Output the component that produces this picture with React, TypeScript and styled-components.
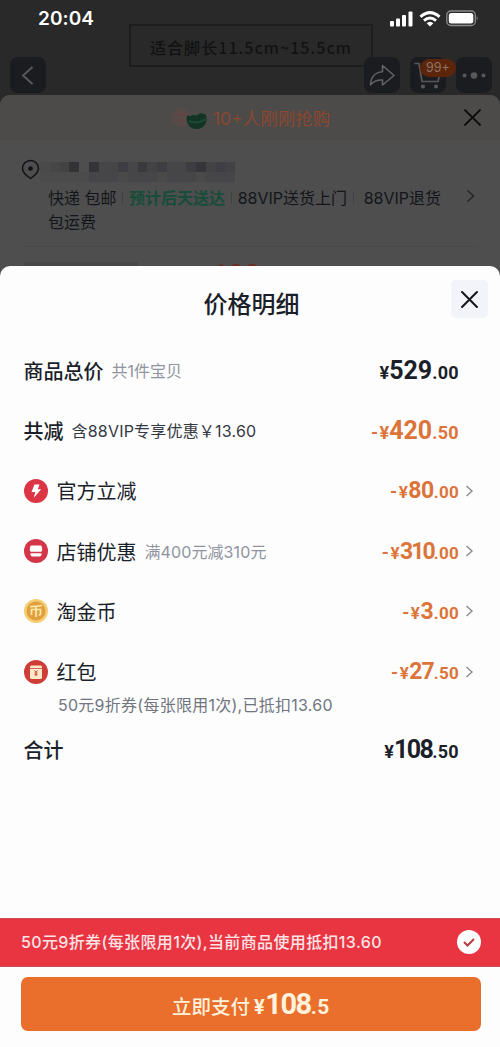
import React from "react";
import styled, { createGlobalStyle } from "styled-components";

const GlobalStyle = createGlobalStyle`
  * { box-sizing: border-box; }
  body {
    margin: 0;
    background: #2a2a2a;
    font-family: Inter, "Noto Sans CJK SC", sans-serif;
    color: #1b1f2a;
  }
`;

const Screen = styled.main`
  position: relative;
  width: 500px;
  height: 1047px;
  overflow: hidden;
  background: #292929;
  display: flex;
  flex-direction: column;
`;

const StatusBar = styled.header`
  position: absolute;
  inset: 0 0 auto 0;
  height: 37px;
  padding: 0 21px 0 38px;
  display: flex;
  align-items: center;
  justify-content: space-between;
  color: #fff;
`;

const Clock = styled.span`
  font-size: 19px;
  font-weight: 600;
  letter-spacing: 0.1px;
`;

const StatusIcons = styled.div`
  display: flex;
  align-items: center;
  gap: 5px;
`;

const ProductImage = styled.section`
  height: 95px;
  padding-top: 24px;
  display: flex;
  justify-content: center;
  align-items: flex-start;
`;

const SizeLabel = styled.div`
  width: 244px;
  height: 43px;
  margin-left: 2px;
  border: 2px solid #1d1d1d;
  display: flex;
  align-items: center;
  justify-content: center;
  font: 500 16px "Noto Sans CJK SC", sans-serif;
  letter-spacing: 1.05px;
  padding-top: 3px;
  color: #121212;
  white-space: nowrap;
`;

const NavBar = styled.nav`
  position: absolute;
  top: 57px;
  left: 10px;
  right: 8px;
  display: flex;
  gap: 10px;
`;

const NavButton = styled.div<{ $push?: boolean }>`
  position: relative;
  width: 36px;
  height: 36px;
  margin-right: ${(p) => (p.$push ? "auto" : "0")};
  border-radius: 8px;
  background: #1b1c1f;
  display: flex;
  align-items: center;
  justify-content: center;
`;

const CartBadge = styled.span`
  position: absolute;
  top: 2px;
  left: 10px;
  width: 36px;
  height: 18px;
  border-radius: 9px;
  background: #5c240b;
  color: #8f7765;
  font-size: 12.5px;
  line-height: 18px;
  text-align: center;
  z-index: 1;
`;

const ProductCard = styled.section`
  flex: 1;
  border-radius: 10px 10px 0 0;
  background: #4e4e4e;
  overflow: hidden;
`;

const BuyersStrip = styled.div`
  height: 45px;
  padding: 0 19px 0 171px;
  display: flex;
  align-items: center;
  justify-content: space-between;
  background: #4d4b49;
  color: #8c4730;
  font-size: 17.5px;
`;

const Buyers = styled.div`
  display: flex;
  align-items: center;
  gap: 6px;
  white-space: nowrap;
`;

const Delivery = styled.div`
  height: 106px;
  padding: 18px 25px 0 21px;
  display: flex;
  align-items: flex-start;
`;

const DeliveryBody = styled.div`
  width: 404px;
`;

const MaskedAddress = styled.div`
  display: flex;
  width: 195px;
  height: 20px;
  margin-top: 4px;
`;

const MaskBlock = styled.span<{ $tone: string; $lower: string }>`
  flex: 1;
  height: 20px;
  background: linear-gradient(${(p) => p.$tone} 0 50%, ${(p) => p.$lower} 50%);
`;

const DeliveryLine = styled.div<{ $first?: boolean }>`
  display: flex;
  align-items: center;
  height: 24px;
  margin-top: ${(p) => (p.$first ? 3 : 0)}px;
  padding-left: 8px;
  font-size: 16px;
  color: #14151a;
  white-space: nowrap;
`;

const Promised = styled.span`
  font-weight: 600;
  color: #184c3a;
`;

const Separator = styled.i<{ $after?: number }>`
  width: 1px;
  height: 13px;
  margin: 0 ${(p) => p.$after ?? 6}px 0 5.6px;
  background: #424242;
`;

const DeliveryArrow = styled.div`
  margin: 29px 0 0 auto;
`;

const PriceStrip = styled.div`
  height: 60px;
  margin: 0 24px;
  border-top: 1px solid #494949;
  display: flex;
  align-items: flex-start;
  gap: 74px;
  color: #6b2c18;
  font: 700 28px/28px Roboto, sans-serif;
  padding-top: 14px;
`;

const GreyTag = styled.span`
  width: 114px;
  height: 24px;
  margin-top: 1px;
  background: #484848;
`;

const Sheet = styled.section`
  position: absolute;
  inset: 266px 0 0 0;
  border-radius: 10px 10px 0 0;
  background: #fdfdfd;
  display: flex;
  flex-direction: column;
`;

const SheetHeader = styled.div`
  height: 74px;
  padding: 14px 12px 0 49px;
  display: flex;
  align-items: flex-start;
`;

const Title = styled.h1`
  flex: 1;
  margin: 5px 0 0;
  padding-left: 3px;
  text-align: center;
  font-size: 24px;
  line-height: 40px;
  font-weight: 500;
`;

const CloseButton = styled.div`
  width: 37px;
  height: 38px;
  border-radius: 5px;
  background: #f2f4f9;
  display: flex;
  align-items: center;
  justify-content: center;
`;

const Rows = styled.div`
  flex: 1;
  padding: 0 24px;
`;

const Row = styled.div<{ $h?: number }>`
  height: ${(p) => p.$h ?? 60.3}px;
  display: flex;
  align-items: center;
  white-space: nowrap;
`;

const Label = styled.span<{ $strong?: boolean }>`
  margin-left: -0.5px;
  font-size: 20px;
  font-weight: ${(p) => (p.$strong ? 500 : 400)};
`;

const Note = styled.span<{ $color?: string; $spacing?: number }>`
  margin-left: 8px;
  font-size: 16px;
  letter-spacing: ${(p) => p.$spacing ?? 0}px;
  color: ${(p) => p.$color ?? "#8f949f"};
`;

const RowIcon = styled.svg`
  width: 24px;
  height: 24px;
  margin-right: 9px;
`;

const Coupon = styled.div`
  height: 24px;
  margin-top: -9px;
  margin-bottom: 1px;
  padding-left: 34px;
  line-height: 24px;
  font-size: 16px;
  letter-spacing: 0.26px;
  color: #70757f;
  white-space: nowrap;
`;

const PriceBox = styled.span<{ $accent?: boolean; $arrow?: boolean }>`
  margin-left: auto;
  margin-right: ${(p) => (p.$arrow ? 0 : 17)}px;
  padding-top: 1px;
  display: flex;
  align-items: baseline;
  font-family: Roboto, sans-serif;
  font-weight: 700;
  color: ${(p) => (p.$accent ? "#dc743a" : "#1b1f2a")};
`;

const Small = styled.span<{ $size?: number; $spacing?: number }>`
  font-size: ${(p) => p.$size ?? 18}px;
  letter-spacing: ${(p) => p.$spacing ?? 0}px;
`;

const Big = styled.span<{ $size: number; $spacing?: number }>`
  font-size: ${(p) => p.$size}px;
  letter-spacing: ${(p) => p.$spacing ?? 0}px;
  line-height: 30px;
`;

const ArrowSvg = styled.svg`
  margin-left: 4px;
  margin-top: -1px;
  align-self: center;
`;

const CouponBar = styled.div`
  height: 49px;
  padding: 0 19px 0 21px;
  display: flex;
  align-items: center;
  justify-content: space-between;
  background: #e93442;
  border-top: 1px solid #cf4a56;
  border-bottom: 1px solid #cf4a56;
  color: #ffe4e6;
  font-size: 16px;
  font-weight: 500;
  letter-spacing: 0.36px;
  white-space: nowrap;
`;

const CouponText = styled.span`
  padding-bottom: 3px;
`;

const CheckMark = styled.svg`
  margin-bottom: 2px;
`;

const PayArea = styled.div`
  height: 80px;
  padding: 10px 19px 0 21px;
`;

const PayButton = styled.button`
  width: 100%;
  height: 54px;
  border: 0;
  border-radius: 7px;
  background: #ea6f2d;
  color: #fff2dc;
  display: flex;
  align-items: baseline;
  justify-content: center;
  padding: 10.5px 0 0;
  font: 500 19.5px/36px "Noto Sans CJK SC", sans-serif;
  white-space: nowrap;
`;

const PayAmount = styled.span`
  margin-left: 4px;
  font-family: Roboto, sans-serif;
  font-weight: 700;
`;

function Cross({ size, width, color }: { size: number; width: number; color: string }) {
  return (
    <svg width={size} height={size} viewBox="0 0 16 16" fill="none" stroke={color} strokeWidth={width} strokeLinecap="round">
      <path d="M1 1 15 15M15 1 1 15" />
    </svg>
  );
}

function Arrow() {
  return (
    <ArrowSvg width="13" height="14" viewBox="0 0 13 14" fill="none" stroke="#898b90" strokeWidth="1.4">
      <path d="M3.500 2 9 7 3.500 12" />
    </ArrowSvg>
  );
}

type PriceProps = { sign?: boolean; whole: string; cents: string; tight?: number; accent?: boolean; arrow?: boolean };

function Price({ sign, whole, cents, tight = 0, accent, arrow }: PriceProps) {
  return (
    <PriceBox $accent={accent} $arrow={arrow}>
      {sign && <Small $spacing={1.5}>-</Small>}
      <Small $size={arrow ? 17 : 18} $spacing={arrow ? 0.5 : 0}>¥</Small>
      <Big $size={arrow ? 23 : 25} $spacing={-tight}>{whole}</Big>
      <Small $size={arrow ? 17 : 18} $spacing={0.3}>.{cents}</Small>
      {arrow && <Arrow />}
    </PriceBox>
  );
}

const maskTones = ["#4a4a4a", "#464647", "#434344", "#333336", "#4e4e4e", "#343437", "#464648", "#464648", "#3e3e42", "#464648", "#3a3a3e", "#434346", "#3e3e42", "#464648", "#464648", "#3e3e42", "#35353a", "#434346", "#3f3f43", "#434346"];

export default function App() {
  return (
    <Screen>
      <GlobalStyle />
      <ProductImage>
        <SizeLabel>适合脚长11.5cm~15.5cm</SizeLabel>
      </ProductImage>
      <NavBar>
        <NavButton $push>
          <svg width="36" height="36" fill="none" stroke="#5b5b5d" strokeWidth="1.8"><path d="M22.500 10 13 18.500 22.500 27" /></svg>
        </NavButton>
        <NavButton>
          <svg width="36" height="36" fill="none" stroke="#626264" strokeWidth="1.6" strokeLinejoin="round">
            <path d="M18.500 8.500 30 18.500 18.500 28v-5c-5-.4-9 1.300-12 4.800.3-7.600 4.800-12.500 12-13Z" />
          </svg>
        </NavButton>
        <NavButton>
          <svg width="36" height="36" fill="none" stroke="#58585a" strokeWidth="1.7" strokeLinejoin="round">
            <path d="M4.500 6.500H9L12 24.500H28L30.500 14" />
            <circle cx="13" cy="29.500" r="1.200" fill="#58585a" />
            <circle cx="26" cy="29.500" r="1.200" fill="#58585a" />
          </svg>
          <CartBadge>99+</CartBadge>
        </NavButton>
        <NavButton>
          <svg width="36" height="36" fill="#58585a">
            <circle cx="8.500" cy="18.500" r="2" /><circle cx="18" cy="18.500" r="3.300" /><circle cx="27.500" cy="18.500" r="2" />
          </svg>
        </NavButton>
      </NavBar>
      <ProductCard>
        <BuyersStrip>
          <Buyers>
            <svg width="36" height="22">
              <circle cx="10" cy="10.500" r="9.500" fill="#584a48" />
              <path d="M5 8q2-2 4 0M11 8q2-2 4 0M8 13q3 2 5-1" fill="none" stroke="#713c38" />
              <path d="M16.500 8q2.500 2 5 0l4 .5 4-2.500 5 1.500A10 10 0 1 1 16.500 8Z" fill="#123525" />
              <path d="M18 14q8 4 17-2" fill="none" stroke="#1d4a34" strokeWidth="2" />
            </svg>
            10+人刚刚抢购
          </Buyers>
          <Cross size={17} width={1.8} color="#0b0b0b" />
        </BuyersStrip>
        <Delivery>
          <svg width="19" height="22" viewBox="0 0 19 22" fill="none" stroke="#101114" strokeWidth="1.5">
            <path d="M9.500 20.500C5 17.500 1.500 14 1.500 10.500a8 8 0 0 1 16 0c0 3.500-3.500 7-8 10Z" />
            <circle cx="9.500" cy="10.500" r="1.600" fill="#101114" />
          </svg>
          <DeliveryBody>
            <MaskedAddress>
              {maskTones.map((tone, i) => (
                <MaskBlock key={i} $tone={tone} $lower={i < 5 ? "#4b4b4b" : i % 4 === 0 ? "#4a4a4b" : "#464648"} />
              ))}
            </MaskedAddress>
            <DeliveryLine $first>
              快递 包邮<Separator /><Promised>预计后天送达</Promised><Separator />88VIP送货上门<Separator $after={10} />88VIP退货
            </DeliveryLine>
            <DeliveryLine>包运费</DeliveryLine>
          </DeliveryBody>
          <DeliveryArrow>
            <svg width="9" height="14" fill="none" stroke="#252628" strokeWidth="1.5"><path d="M1.500 1.500 7.500 7 1.500 12.500" /></svg>
          </DeliveryArrow>
        </Delivery>
        <PriceStrip><GreyTag />108</PriceStrip>
      </ProductCard>

      <StatusBar>
        <Clock>20:04</Clock>
        <StatusIcons>
          <svg width="24" height="16" fill="#fff">
            <rect x="0" y="10" width="4" height="5.500" rx="1" /><rect x="6" y="7.500" width="4" height="8" rx="1" />
            <rect x="12" y="4" width="4" height="11.500" rx="1" /><rect x="18.500" y="0.500" width="4" height="15" rx="1" />
          </svg>
          <svg width="22" height="16" viewBox="0 0 22 16" fill="none" stroke="#fff" strokeWidth="3">
            <path d="M1.500 5.800Q11-2.600 20.500 5.800" /><path d="M5 9.600Q11 4.400 17 9.600" />
            <path d="M7.600 12.200Q11 9.200 14.400 12.200L11 15.600Z" fill="#fff" stroke="none" />
          </svg>
          <svg width="33" height="17">
            <rect x="0.800" y="1" width="28.500" height="14.500" rx="4" fill="none" stroke="#8a8a8a" strokeWidth="1.3" />
            <rect x="2.800" y="3" width="24.500" height="10.500" rx="2.500" fill="#fff" />
            <path d="M30.700 6q2 2.300 0 4.600Z" fill="#8a8a8a" />
          </svg>
        </StatusIcons>
      </StatusBar>

      <Sheet>
        <SheetHeader>
          <Title>价格明细</Title>
          <CloseButton><Cross size={17} width={1.9} color="#14161c" /></CloseButton>
        </SheetHeader>
        <Rows>
          <Row><Label $strong>商品总价</Label><Note>共1件宝贝</Note><Price whole="529" cents="00" /></Row>
          <Row><Label $strong>共减</Label><Note $color="#343843" $spacing={0.2}>含88VIP专享优惠￥13.60</Note><Price sign accent whole="420" cents="50" /></Row>
          <Row>
            <RowIcon viewBox="0 0 24 24">
              <circle cx="12" cy="12" r="12" fill="#dc3545" />
              <path d="M10.500 5.500h5l-1.700 4.700h3.400L9.800 18.800l1.400-5.800H7.500Z" fill="#fff" />
            </RowIcon>
            <Label>官方立减</Label><Price sign accent arrow tight={0.5} whole="80" cents="00" />
          </Row>
          <Row>
            <RowIcon viewBox="0 0 24 24">
              <circle cx="12" cy="12" r="12" fill="#d43549" />
              <path d="M7.500 6.500h9q1 0 1.200 1l.6 3.500q0 1.800-1.500 1.800H7.200q-1.500 0-1.500-1.800l.6-3.500q.2-1 1.200-1Z" fill="#fff" />
              <path d="M6.500 14.300h11v1.200q0 2-2 2h-7q-2 0-2-2Z" fill="#fff" />
            </RowIcon>
            <Label>店铺优惠</Label><Note $spacing={0.1}>满400元减310元</Note><Price sign accent arrow tight={2} whole="310" cents="00" />
          </Row>
          <Row>
            <RowIcon viewBox="0 0 24 24">
              <circle cx="12" cy="12" r="12" fill="#f6cd72" />
              <circle cx="12" cy="12" r="9.500" fill="#dfa03f" />
              <path d="M6 7.500q6 .2 12-1M12 7v11M7.500 16v-5.500h9V15q0 1-1.800 1" fill="none" stroke="#ffe9a8" strokeWidth="1.7" />
            </RowIcon>
            <Label>淘金币</Label><Price sign accent arrow whole="3" cents="00" />
          </Row>
          <Row>
            <RowIcon viewBox="0 0 24 24">
              <circle cx="12" cy="12" r="12" fill="#cf3d38" />
              <rect x="6" y="5.500" width="12" height="13.500" rx="1.500" fill="#fde8c8" />
              <path d="M6 8.500h12" stroke="#d8685a" strokeWidth="1" />
              <path d="m10.500 10.500 1.500 1.700 1.500-1.700M12 12.200V16M10.500 13h3M10.500 14.700h3" fill="none" stroke="#c8523f" />
            </RowIcon>
            <Label>红包</Label><Price sign accent arrow tight={1} whole="27" cents="50" />
          </Row>
          <Coupon>50元9折券(每张限用1次),已抵扣13.60</Coupon>
          <Row $h={64}><Label $strong>合计</Label><Price tight={1.6} whole="108" cents="50" /></Row>
        </Rows>
        <CouponBar>
          <CouponText>50元9折券(每张限用1次),当前商品使用抵扣13.60</CouponText>
          <CheckMark width="24" height="24" fill="none"><circle cx="12" cy="12" r="12" fill="#fff" /><path d="m7 12 3.500 3.500L17 9" stroke="#bd3945" strokeWidth="2" /></CheckMark>
        </CouponBar>
        <PayArea>
          <PayButton>
            立即支付<PayAmount><Small $size={20} $spacing={0.5}>¥</Small><Big $size={29} $spacing={-1.5}>108</Big><Small $size={21} $spacing={0.5}>.5</Small></PayAmount>
          </PayButton>
        </PayArea>
      </Sheet>
    </Screen>
  );
}
